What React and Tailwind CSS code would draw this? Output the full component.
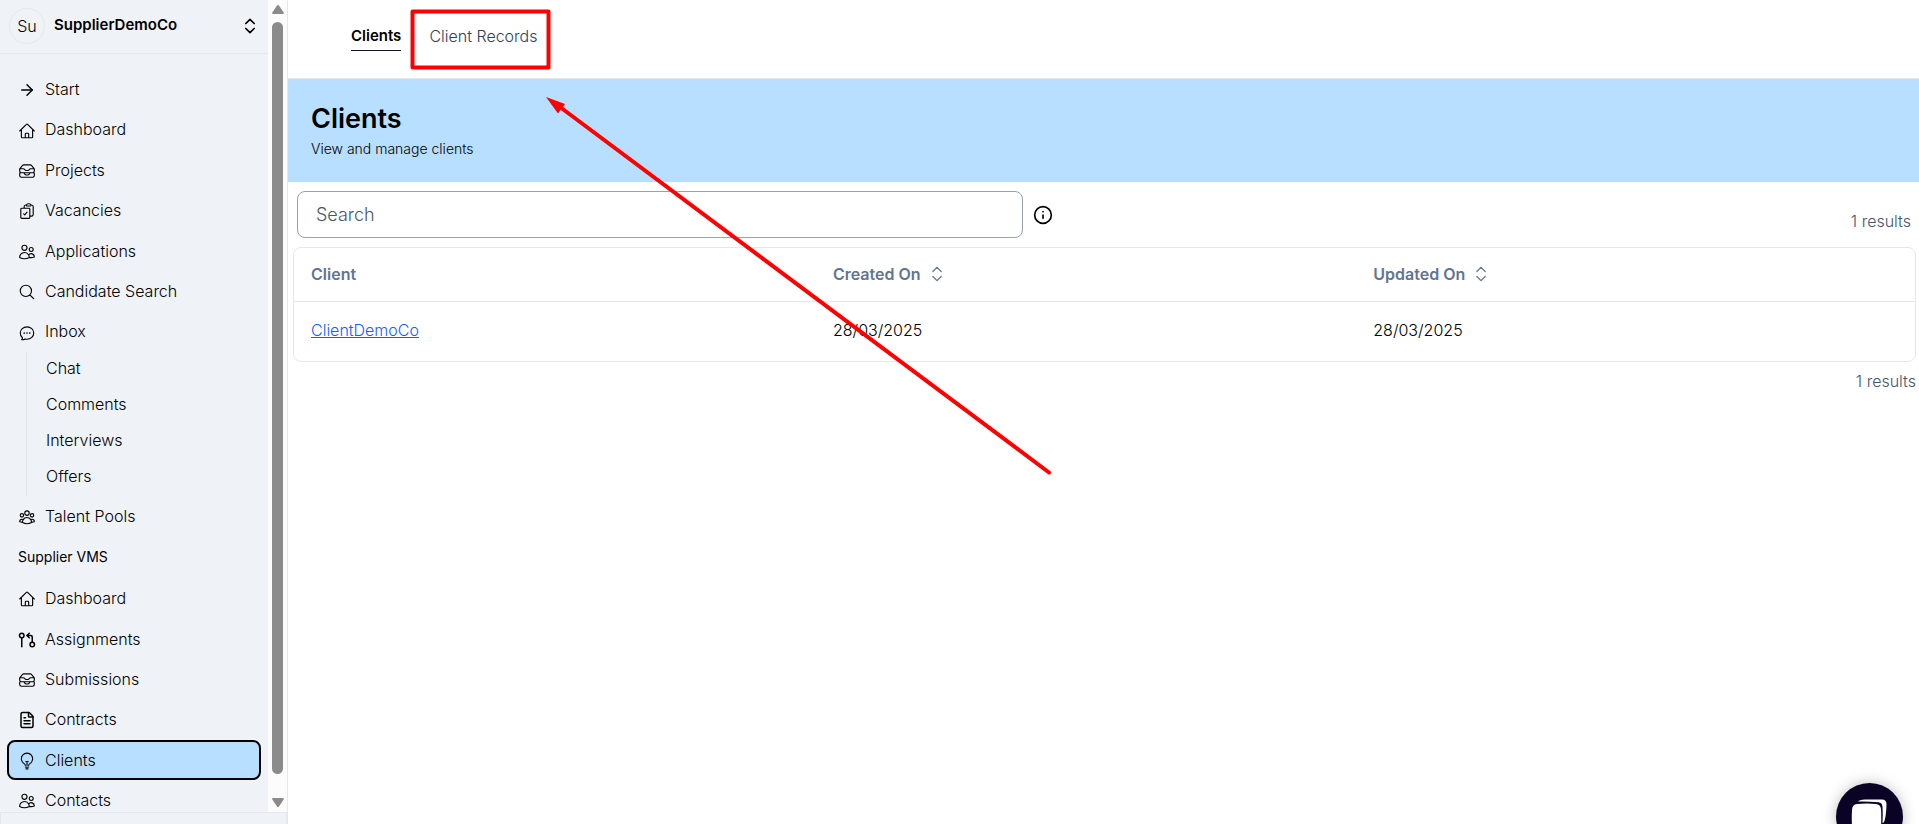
import React, { useState } from 'react';
import { ArrowRight, ChevronsUpDown, FileText, GitPullRequestArrow, Info } from 'lucide-react';
import {
    HiOutlineChatBubbleOvalLeftEllipsis,
    HiOutlineClipboardDocumentCheck,
    HiOutlineHome,
    HiOutlineInboxStack,
    HiOutlineLightBulb,
    HiOutlineMagnifyingGlass,
    HiOutlineUserGroup,
    HiOutlineUsers,
} from 'react-icons/hi2';

const mainLinks = [
    { name: 'Start', icon: ArrowRight },
    { name: 'Dashboard', icon: HiOutlineHome },
    { name: 'Projects', icon: HiOutlineInboxStack },
    { name: 'Vacancies', icon: HiOutlineClipboardDocumentCheck },
    { name: 'Applications', icon: HiOutlineUsers },
    { name: 'Candidate Search', icon: HiOutlineMagnifyingGlass },
    { name: 'Inbox', icon: HiOutlineChatBubbleOvalLeftEllipsis, children: ['Chat', 'Comments', 'Interviews', 'Offers'] },
    { name: 'Talent Pools', icon: HiOutlineUserGroup },
];

const vmsLinks = [
    { name: 'Dashboard', icon: HiOutlineHome },
    { name: 'Assignments', icon: GitPullRequestArrow },
    { name: 'Submissions', icon: HiOutlineInboxStack },
    { name: 'Contracts', icon: FileText },
    { name: 'Clients', icon: HiOutlineLightBulb, active: true },
    { name: 'Contacts', icon: HiOutlineUsers },
];

const clients = [{ name: 'ClientDemoCo', created: '28/03/2025', updated: '28/03/2025' }];

function NavItem({ item }) {
    const Icon = item.icon;
    return (
        <li>
            <a
                href="#"
                className={`flex items-center gap-[9px] rounded-lg border-2 px-[9px] py-[7px] ${item.active
                    ? 'border-black bg-[#b8dfff]'
                    : 'border-transparent'
                    }`}
            >
                <Icon className="mt-0.5 h-[18px] w-[18px] shrink-0" />
                <span>{item.name}</span>
            </a>
            {item.children && (
                <ul className="ml-[19px] border-l border-gray-200">
                    {item.children.map((child) => (
                        <li key={child}>
                            <a href="#" className="flex h-9 items-center pb-1 pl-[19px]">{child}</a>
                        </li>
                    ))}
                </ul>
            )}
        </li>
    );
}

function ScrollTrack() {
    return (
        <div className="flex w-[19px] shrink-0 flex-col items-center bg-[#fcfcfc] pt-1 pb-1">
            <svg className="h-3 w-3 shrink-0" viewBox="0 0 12 12" fill="#8b8b8b">
                <path d="M5 1.500q1-1.200 2 0l4.700 7q.6 1.500-1 1.500H1.300q-1.600 0-1-1.500z" />
            </svg>
            <div className="mt-1.5 mb-[22px] w-[11px] flex-1 rounded-full bg-[#8b8b8b]" />
            <svg className="h-3 w-3 shrink-0" viewBox="0 0 12 12" fill="#8b8b8b">
                <path d="M5 10.500q1 1.200 2 0l4.700-7q.6-1.500-1-1.500H1.300q-1.600 0-1 1.500z" />
            </svg>
        </div>
    );
}

function Sidebar() {
    return (
        <aside className="flex w-72 shrink-0 flex-col border-r border-gray-200 bg-[#eff3f8]">
            <div className="flex min-h-0 flex-1">
                <div className="flex min-w-0 flex-1 flex-col overflow-hidden">
                    <button className="flex h-[54px] shrink-0 items-center gap-[9px] border-b border-gray-200 pr-2 pb-0.5 pl-[9px] text-left">
                        <span className="flex h-9 w-9 items-center justify-center rounded-full border border-gray-200">Su</span>
                        <span className="flex-1 text-[15px] font-semibold">SupplierDemoCo</span>
                        <ChevronsUpDown className="h-5 w-5" />
                    </button>
                    <nav className="px-[7px] pt-[15px] leading-[1.4]">
                        <ul>
                            {mainLinks.map((item) => <NavItem key={item.name} item={item} />)}
                        </ul>
                        <h2 className="flex h-[42px] items-center px-[11px] text-sm font-normal">Supplier VMS</h2>
                        <ul>
                            {vmsLinks.map((item) => <NavItem key={item.name} item={item} />)}
                        </ul>
                    </nav>
                </div>
                <ScrollTrack />
            </div>
            <div className="h-3 shrink-0 border-x border-t border-gray-200" />
        </aside>
    );
}

function SortHeader({ label }) {
    return (
        <button className="flex items-center gap-1.5">
            <span>{label}</span>
            <ChevronsUpDown className="h-5 w-5" strokeWidth={1.5} />
        </button>
    );
}

function ChatLauncher() {
    return (
        <button aria-label="Open chat" className="absolute right-4 -bottom-[26px] h-[67px] w-[67px] rounded-full bg-[#0b0326] shadow-[0_0_14px_rgba(0,0,0,0.25)]">
            <svg viewBox="0 0 67 67" className="h-full w-full">
                <path d="M22 18.500q1-1.500 7-2h17q4.500 0 4.500 5-.2 10-2 16.500-.8 2-2 2 .5-8 0-16-.3-4.500-4-4.800-10-1-20.500-.7z" fill="#fff" />
                <path d="M16 27q.2-5.500 5-6 10.500-.8 19 0 4.500.5 5 5 .6 9 0 17-.6 5-5 5.500-10 1-19 0-4.500-.5-5-5.500-.5-8 0-16z" fill="#fff" />
            </svg>
        </button>
    );
}

function Annotation() {
    return (
        <svg className="pointer-events-none absolute top-0 left-0" width="1060" height="480" viewBox="0 0 1060 480" fill="none">
            <rect x="412.500" y="11.500" width="136" height="56" stroke="#ff0000" strokeWidth="4" strokeLinejoin="round" />
            <path d="M560 107L1049 472.500" stroke="#ff0000" strokeWidth="4" strokeLinecap="round" />
            <path d="M546 97L565 104L558 113.500Z" fill="#ff0000" />
        </svg>
    );
}

export default function App() {
    const [query, setQuery] = useState('');
    const results = clients.filter((c) => c.name.toLowerCase().includes(query.toLowerCase()));

    return (
        <div className="relative flex h-screen overflow-hidden bg-white font-['Inter',sans-serif] text-base font-light text-black">
            <Sidebar />
            <main className="min-w-0 flex-1">
                <nav className="flex h-[79px] items-start gap-7 border-b border-gray-200 pt-6 pl-[63px]">
                    <a href="#" className="border-b border-slate-900 pb-0.5 text-[15px] leading-6 font-semibold">Clients</a>
                    <a href="#" className="text-slate-700">Client Records</a>
                </nav>
                <header className="flex h-[103px] flex-col justify-center bg-[#b8dfff] px-[23px]">
                    <h1 className="mb-1 text-[27px] leading-8 font-semibold">Clients</h1>
                    <p className="text-sm">View and manage clients</p>
                </header>
                <div className="flex items-center gap-2.5 pt-[9px] pr-2 pl-[9px]">
                    <input
                        type="text"
                        aria-label="Search"
                        placeholder="Search"
                        value={query}
                        onChange={(e) => setQuery(e.target.value)}
                        className="h-[47px] w-[45%] rounded-lg border border-gray-400 px-[18px] text-lg placeholder:text-gray-600"
                    />
                    <Info className="h-5 w-5" />
                    <span className="mt-3 ml-auto text-slate-600">{results.length} results</span>
                </div>
                <div className="mt-[9px] mr-[3px] ml-[5px] overflow-hidden rounded-lg border border-gray-200">
                    <table className="w-full table-fixed text-left">
                        <thead>
                            <tr className="h-[53px] border-b border-gray-200 text-slate-500">
                                <th className="w-[32.2%] px-[17px] font-semibold">Client</th>
                                <th className="w-1/3 px-[17px] font-semibold"><SortHeader label="Created On" /></th>
                                <th className="px-[17px] font-semibold"><SortHeader label="Updated On" /></th>
                            </tr>
                        </thead>
                        <tbody>
                            {results.map((client) => (
                                <tr key={client.name} className="h-[60px]">
                                    <td className="px-[17px] pb-0.5"><a href="#" className="text-blue-600 underline">{client.name}</a></td>
                                    <td className="px-[17px] pb-0.5">{client.created}</td>
                                    <td className="px-[17px] pb-0.5">{client.updated}</td>
                                </tr>
                            ))}
                        </tbody>
                    </table>
                </div>
                <p className="mt-[7px] mr-[3px] text-right text-slate-600">{results.length} results</p>
            </main>
            <ChatLauncher />
            <Annotation />
        </div>
    );
}
